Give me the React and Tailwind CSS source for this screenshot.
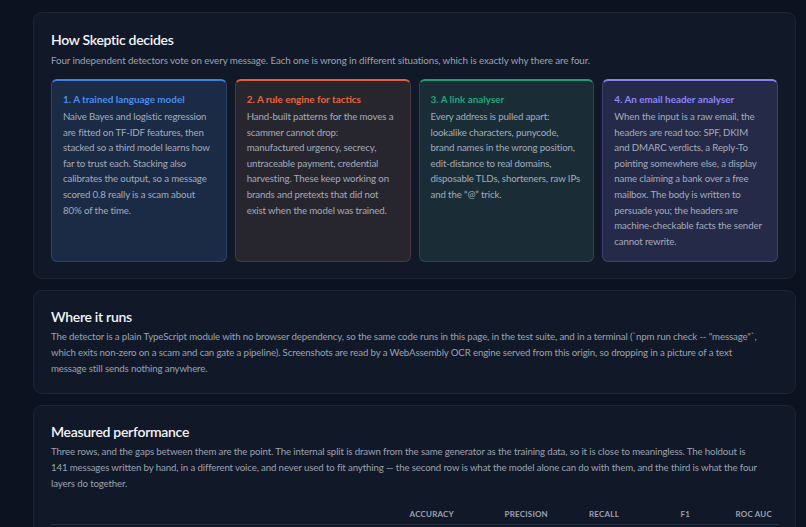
import React from "react";

const cards = [
  {
    title: "1. A trained language model",
    body: "Naive Bayes and logistic regression are fitted on TF-IDF features, then stacked so a third model learns how far to trust each. Stacking also calibrates the output, so a message scored 0.8 really is a scam about 80% of the time.",
    wrap: "bg-[#1b2a45] border-[#2a4470] border-t-[#3f7fe0]",
    titleCls: "text-[#4a8eee]",
  },
  {
    title: "2. A rule engine for tactics",
    body: "Hand-built patterns for the moves a scammer cannot drop: manufactured\u00a0urgency, secrecy, untraceable payment, credential harvesting. These keep working on brands and pretexts that did not exist when the model was trained.",
    wrap: "bg-[#27262f] border-[#47393d] border-t-[#e0613a]",
    titleCls: "text-[#e8663d]",
  },
  {
    title: "3. A link analyser",
    body: "Every address is pulled apart: lookalike characters, punycode, brand names in the wrong position, edit-distance to real domains, disposable TLDs, shorteners, raw IPs and the “@” trick.",
    wrap: "bg-[#1a2d37] border-[#25494c] border-t-[#1f9d73]",
    titleCls: "text-[#21a57a]",
  },
  {
    title: "4. An email header analyser",
    body: "When the input is a raw email, the headers are read too: SPF, DKIM and\u00a0DMARC verdicts, a Reply-To pointing somewhere else, a display name claiming a bank over a free mailbox. The body is written to persuade you; the headers are machine-checkable facts the sender cannot rewrite.",
    wrap: "bg-[#252a48] border-[#3d4270] border-t-[#8a82ee]",
    titleCls: "text-[#8c86f6]",
  },
];

const whereText =
  "The detector is a plain TypeScript module with no browser dependency, so the same code runs in this page, in the test suite, and in a terminal (`npm run check -- \"message\"`, which exits non-zero on a scam and can gate a pipeline). Screenshots are read by a WebAssembly OCR engine served from this origin, so dropping in a picture of a text message\u00a0still sends nothing anywhere.";

const perfText =
  "Three rows, and the gaps between them are the point. The internal split is drawn from the same generator as the training data, so it is close to meaningless. The holdout is 141\u00a0messages written by hand, in a different voice, and never used to fit anything \u2014 the second row is what the model alone can do with them, and the third is what the four layers do together.";

function Section({ title, children, pt = "pt-[16px]", pb = "pb-[16px]" }) {
  return (
    <section className={"rounded-[9px] border border-[#1d2536] bg-[#111827] pl-[17px] pr-[17px] " + pt + " " + pb}>
      <h2 className="text-[14px] leading-[19px] font-semibold tracking-[-0.3px] text-[#f1f5f9]">{title}</h2>
      {children}
    </section>
  );
}

export default function App() {
  return (
    <div
      className="min-h-[527px] bg-[#0c1220] pt-[12px] pl-[33px] pr-[10px] pb-4"
      style={{ fontFamily: "Lato, 'Open Sans', sans-serif" }}
    >
      <div className="flex w-[763px] flex-col gap-[11px]">
        <Section title="How Skeptic decides" pt="pt-[17px]">
          <p className="mt-[3px] text-[9.8px] leading-[16px] tracking-[-0.1px] text-[#9aa3b2]">
            Four independent detectors vote on every message. Each one is wrong in different situations, which is exactly why there are four.
          </p>
          <div className="mt-[11px] grid grid-cols-4 gap-[8px]">
            {cards.map((c) => (
              <div
                key={c.title}
                className={"rounded-[6px] border border-t-2 px-[11px] pt-[11px] pb-[12px] " + c.wrap}
              >
                <div className={"text-[9.9px] leading-[14px] font-bold " + c.titleCls}>{c.title}</div>
                <p className="mt-[3px] text-[9.7px] leading-[15.6px] tracking-[-0.14px] text-[#a3acbb]">{c.body}</p>
              </div>
            ))}
          </div>
        </Section>

        <Section title="Where it runs" pb="pb-[17px]">
          <p className="mt-[2px] text-[9.7px] leading-[16px] tracking-[-0.14px] text-[#9aa3b2]">{whereText}</p>
        </Section>

        <Section title="Measured performance">
          <p className="mt-[2px] text-[9.7px] leading-[16px] tracking-[-0.14px] text-[#9aa3b2]">{perfText}</p>
          <div className="mt-[13px] grid grid-cols-[350px_61px_94px_71px_71px_82px] border-b border-[#263045] text-[8px] leading-[20px] font-bold uppercase tracking-[0.2px] text-[#9aa3b2]">
            <div></div>
            <div className="pr-[8px] text-right">Accuracy</div>
            <div className="pr-[8px] text-right">Precision</div>
            <div className="pr-[8px] text-right">Recall</div>
            <div className="pr-[8px] text-right">F1</div>
            <div className="pr-[8px] text-right">ROC AUC</div>
          </div>
          <div className="h-[40px]"></div>
        </Section>
      </div>
    </div>
  );
}
